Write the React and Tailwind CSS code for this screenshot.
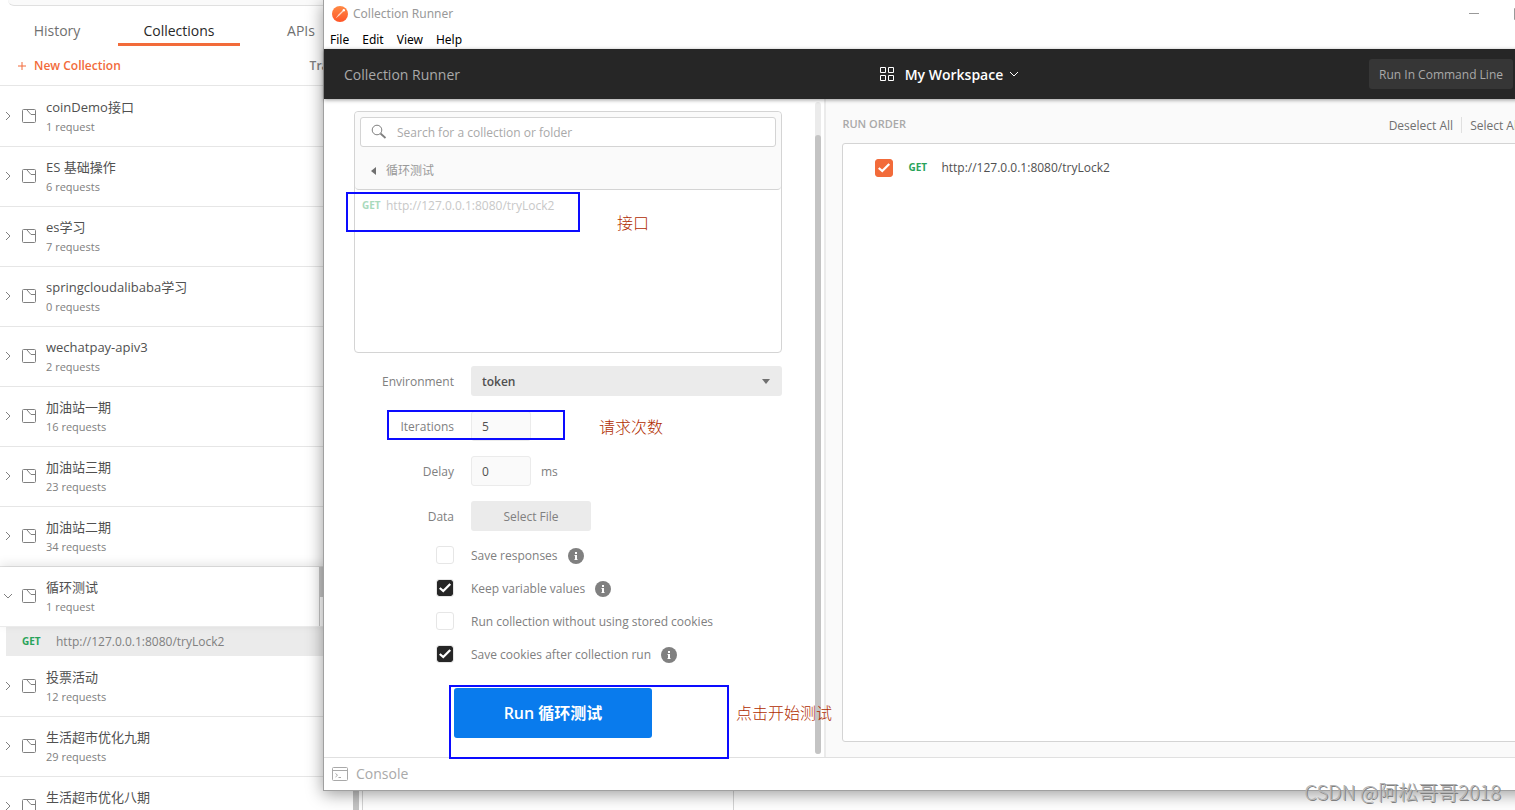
import { useState } from "react";

function ChevronIcon(p) { return <svg {...p} viewBox="0 0 10 10" fill="none" stroke="currentColor"><path d="M3 1 L7 5 L3 9"/></svg>; }
function ChevronDownIcon(p) { return <svg {...p} viewBox="0 0 10 10" fill="none" stroke="currentColor"><path d="M1 3 L5 7 L9 3"/></svg>; }
function FolderIcon(p) { return <svg {...p} viewBox="0 0 14 14" fill="none" stroke="currentColor"><path d="M1.5 0.5 H12.5 Q13.5 0.5 13.5 1.5 V12.5 Q13.5 13.5 12.5 13.5 H1.5 Q0.5 13.5 0.5 12.5 V1.5 Q0.5 0.5 1.5 0.5 Z M5 1 L9 5.5 H13.5"/></svg>; }
function PlusIcon(p) { return <svg {...p} viewBox="0 0 8 8" fill="none" stroke="currentColor"><path d="M4 0 V8 M0 4 H8"/></svg>; }
function SearchIcon(p) { return <svg {...p} viewBox="0 0 16 16" fill="none" stroke="currentColor"><circle cx="6" cy="6" r="4.8"/><path d="M9.5 9.5 L14.5 14" strokeWidth="1.8"/></svg>; }
function GridIcon(p) { return <svg {...p} viewBox="0 0 15 15" fill="none" stroke="currentColor"><path d="M0.5 0.5 H5.5 V5.5 H0.5 Z M8.5 0.5 H13.5 V5.5 H8.5 Z M0.5 8.5 H5.5 V13.5 H0.5 Z M8.5 8.5 H13.5 V13.5 H8.5 Z"/></svg>; }
function TickIcon(p) { return <svg {...p} viewBox="0 0 16 16" fill="none" stroke="currentColor" strokeWidth="2.6"><path d="M2 8 L6 11.5 L14 3.5"/></svg>; }
function ConsoleIcon(p) { return <svg {...p} viewBox="0 0 16 14" fill="none" stroke="currentColor"><rect x="0.5" y="0.5" width="15" height="13" rx="1"/><path d="M0.5 3.5 H15.5 M3.5 6.5 L5.5 8.2 L3.5 10 M6.5 10.5 H9"/></svg>; }

function InfoIcon(p) {
  return (
    <svg {...p} viewBox="0 0 16 16">
      <circle cx="8" cy="8" r="8" fill="#808080" />
      <rect x="7" y="4" width="2" height="2" fill="#fff" />
      <rect x="7" y="7" width="2" height="5" fill="#fff" />
      <rect x="6.5" y="7" width="1" height="1" fill="#fff" />
      <rect x="6.5" y="11" width="3" height="1" fill="#fff" />
    </svg>
  );
}

function PostmanLogo(p) {
  return (
    <svg {...p} viewBox="0 0 16 16">
      <defs>
        <linearGradient id="logo" x1="0" y1="0" x2="0" y2="1">
          <stop offset="0" stopColor="#ff8a45" />
          <stop offset="1" stopColor="#ff5527" />
        </linearGradient>
      </defs>
      <circle cx="8" cy="8" r="8" fill="url(#logo)" />
      <path d="M3.6 12.4 L6.4 8.6 L10.6 4.6 L11.4 5.4 L7.4 9.6 Z" fill="#ffd9c8" />
      <circle cx="11.8" cy="4.2" r="1.2" fill="#fff" />
    </svg>
  );
}

const COLLECTIONS = [
  { name: "coinDemo接口", count: "1 request" },
  { name: "ES 基础操作", count: "6 requests" },
  { name: "es学习", count: "7 requests" },
  { name: "springcloudalibaba学习", count: "0 requests" },
  { name: "wechatpay-apiv3", count: "2 requests" },
  { name: "加油站一期", count: "16 requests" },
  { name: "加油站三期", count: "23 requests" },
  { name: "加油站二期", count: "34 requests" },
  { name: "循环测试", count: "1 request", open: true },
  { name: "投票活动", count: "12 requests" },
  { name: "生活超市优化九期", count: "29 requests" },
  { name: "生活超市优化八期" },
];

const OPTIONS = [
  { id: "save-responses", label: "Save responses", checked: false, info: true },
  { id: "keep-values", label: "Keep variable values", checked: true, info: true },
  { id: "no-cookies", label: "Run collection without using stored cookies", checked: false, info: false },
  { id: "save-cookies", label: "Save cookies after collection run", checked: true, info: true },
];

const REQUEST_URL = "http://127.0.0.1:8080/tryLock2";

function CollectionRow({ item }) {
  return (
    <li>
      <div className={item.open ? "relative flex h-[60px] border-b border-[#ebebeb] shadow-[0_-3px_10px_rgba(0,0,0,0.1)]" : "flex h-[60px] border-b border-[#e6e6e6]"}>
        <button aria-label={"Toggle " + item.name} className="mt-6 ml-[3px] flex h-[10px] w-[10px] text-[#808080]">
          {item.open ? <ChevronDownIcon className="h-[10px] w-[10px]" /> : <ChevronIcon className="h-[10px] w-[10px]" />}
        </button>
        <FolderIcon className="mt-[22px] ml-[9px] h-[14px] w-[14px] text-[#808080]" />
        <div className="ml-[10px] pt-[10px] leading-5">
          <div className="text-[13px] text-[#505050]">{item.name}</div>
          {item.count && <div className="text-[11px] text-[#808080]">{item.count}</div>}
        </div>
        {item.open && (
          <div className="mr-[39px] ml-auto flex w-[4px] flex-col">
            <div className="h-[30px] bg-[#c8c8c8]" />
            <div className="flex-1 border-l border-[#c8c8c8]" />
          </div>
        )}
      </div>
      {item.open && (
        <div className="mb-px ml-[6px] flex h-[29px] items-center bg-[#ebebeb]">
          <span className="ml-4 w-[34px] text-[10px] font-bold text-[#29a35a]">GET</span>
          <span className="text-xs text-[#808080]">{REQUEST_URL}</span>
        </div>
      )}
    </li>
  );
}

function Sidebar() {
  return (
    <aside className="w-[323px] shrink-0 overflow-hidden">
      <div className="w-[362px]">
        <div className="ml-2 h-[6px] rounded-b-2xl border-b border-[#e0e0e0] bg-[#fafafa]" />
        <nav className="-ml-1 flex h-10 text-sm text-[#707070]">
          <button className="w-[122px] border-b-3 border-transparent pt-3">History</button>
          <button className="w-[122px] border-b-3 border-[#f26b3a] pt-3 text-[#282828]">Collections</button>
          <button className="w-[122px] border-b-3 border-transparent pt-3">APIs</button>
        </nav>
        <div className="flex h-10 items-center border-b border-[#e6e6e6] pl-[18px] text-xs font-semibold">
          <button className="flex items-center gap-2 text-[#f26b3a]">
            <PlusIcon className="h-2 w-2" />New Collection
          </button>
          <button className="mr-5 ml-auto text-[#808080]">Trash</button>
        </div>
        <ul className="pt-px">
          {COLLECTIONS.map((c) => <CollectionRow key={c.name} item={c} />)}
        </ul>
      </div>
    </aside>
  );
}

function Checkbox({ id, checked, onChange, orange, label }) {
  return (
    <span className="grid h-[18px] w-[18px] shrink-0 place-items-center">
      <input
        id={id}
        type="checkbox"
        aria-label={label}
        checked={checked}
        onChange={onChange}
        className={orange
          ? "peer col-start-1 row-start-1 h-[18px] w-[18px] appearance-none rounded-[3px] border border-[#e6e6e6] checked:border-[#f26b3a] checked:bg-[#f26b3a]"
          : "peer col-start-1 row-start-1 h-[18px] w-[18px] appearance-none rounded-[3px] border border-[#e6e6e6] bg-white bg-clip-padding checked:bg-[#262626]"}
      />
      <TickIcon className="pointer-events-none z-1 col-start-1 row-start-1 hidden h-[14px] w-[14px] text-white peer-checked:block" />
    </span>
  );
}

function Mark({ className }) {
  return <div className={"pointer-events-none absolute border-2 border-[#0c0cff] " + className} />;
}

function Note({ className, children }) {
  return <span className={"absolute text-base leading-5 font-light whitespace-nowrap text-[#b02c00] " + className}>{children}</span>;
}

function FormRow({ label, htmlFor, children }) {
  return (
    <div className="relative flex h-[30px] items-center">
      <label htmlFor={htmlFor} className="mr-[17px] w-[100px] pt-0.5 text-right">{label}</label>
      {children}
    </div>
  );
}

function SettingsPanel() {
  const [options, setOptions] = useState(OPTIONS);
  const [iterations, setIterations] = useState("5");
  const [delay, setDelay] = useState("0");

  const toggle = (id) => {
    setOptions(prev => prev.map(o => (o.id === id ? { ...o, checked: !o.checked } : o)));
  };

  return (
    <section className="flex w-2/5 shrink-0 border-r-2 border-[#ebebeb] text-xs text-[#808080]">
      <div className="min-w-0 flex-1 pt-3 pr-[33px] pl-[30px]">
        <div className="h-[242px] rounded border border-[#d4d4d4]">
          <div className="h-[78px] rounded border-b border-[#d4d4d4] bg-[#fafafa] p-[5px]">
            <label className="flex h-[30px] items-center rounded-[3px] border border-[#d4d4d4] bg-white pl-[10px]">
              <SearchIcon className="h-4 w-4" />
              <input
                aria-label="Search collections"
                placeholder="Search for a collection or folder"
                className="ml-[10px] flex-1 pt-0.5 outline-none placeholder:text-[#a9a9a9]"
              />
            </label>
            <button className="mt-3 ml-[10px] flex h-6 items-center text-[#999]">
              <svg className="mr-[10px] h-2 w-[6px]" viewBox="0 0 6 8"><path d="M6 0 V8 L1 4 Z" fill="#707070" /></svg>
              循环测试
            </button>
          </div>
          <div className="relative flex h-[30px] items-center pt-0.5 pl-[7px]">
            <span className="w-6 text-[10px] font-bold text-[#a9dabd]">GET</span>
            <span className="text-[#c8c8c8]">{REQUEST_URL}</span>
            <Mark className="-left-[9px] top-[2px] h-10 w-[234px]" />
            <Note className="top-[23px] left-[262px]">接口</Note>
          </div>
        </div>

        <form className="mt-[13px]" onSubmit={(e) => e.preventDefault()}>
          <div className="flex flex-col gap-[15px]">
            <FormRow label="Environment" htmlFor="environment">
              <div className="grid flex-1 items-center">
                <select id="environment" className="col-start-1 row-start-1 h-[30px] appearance-none rounded-[3px] bg-[#ebebeb] px-[11px] pt-0.5 font-semibold text-[#505050]">
                  <option>token</option>
                </select>
                <svg className="pointer-events-none z-1 col-start-1 row-start-1 mr-3 h-[5px] w-2 justify-self-end" viewBox="0 0 8 5"><path d="M0 0 H8 L4 5 Z" fill="#707070" /></svg>
              </div>
            </FormRow>
            <FormRow label="Iterations" htmlFor="iterations">
              <input id="iterations" value={iterations} onChange={(e) => setIterations(e.target.value)} className="h-[30px] w-[60px] rounded-[3px] border border-[#ebebeb] bg-[#fafafa] px-[10px] text-[#505050]" />
              <Mark className="-top-px left-[33px] h-[30px] w-[178px]" />
              <Note className="top-[6px] left-[245px]">请求次数</Note>
            </FormRow>
            <FormRow label="Delay" htmlFor="delay">
              <input id="delay" value={delay} onChange={(e) => setDelay(e.target.value)} className="h-[30px] w-[60px] rounded-[3px] border border-[#ebebeb] bg-[#fafafa] px-[10px] text-[#505050]" />
              <span className="ml-[10px] pt-0.5">ms</span>
            </FormRow>
            <FormRow label="Data" htmlFor="data-file">
              <button id="data-file" type="button" className="h-[30px] w-[120px] rounded-[3px] bg-[#ebebeb] pt-0.5">Select File</button>
            </FormRow>
          </div>

          <div className="mt-[7px] ml-[82px]">
            {options.map((o) => (
              <div key={o.id} className="flex h-[33px] items-center">
                <Checkbox id={o.id} checked={o.checked} onChange={() => toggle(o.id)} />
                <label htmlFor={o.id} className="ml-[17px] pt-0.5">{o.label}</label>
                {o.info && <InfoIcon className="mt-0.5 ml-[10px] h-4 w-4" />}
              </div>
            ))}
          </div>

          <div className="relative mt-[18px] ml-[100px]">
            <button className="h-[50px] w-[198px] rounded-[3px] bg-[#097bed] text-base font-semibold text-white">Run 循环测试</button>
            <Mark className="-top-[3px] -left-[5px] h-[74px] w-[280px]" />
            <Note className="top-[15px] left-[282px]">点击开始测试</Note>
          </div>
        </form>
      </div>
      {/* Scrollbar */}
      <div className="mt-[3px] mr-[3px] mb-[3px] flex w-[6px] flex-col rounded-full bg-[#ebebeb] pt-[33px]">
        <div className="flex-1 rounded-full bg-[#c4c4c4]" />
      </div>
    </section>
  );
}

function RunOrderPanel() {
  const [checked, setChecked] = useState(true);
  return (
    <section className="flex flex-1 flex-col bg-[#fafafa] pb-[15px] pl-4 text-xs">
      <div className="flex h-11 items-center pt-2 pr-[60px] text-[#707070]">
        <h2 className="pb-0.5 text-[11px] font-semibold text-[#a9a9a9]">RUN ORDER</h2>
        <button className="ml-auto pt-0.5">Deselect All</button>
        <span className="mx-2 h-4 w-px bg-[#e0e0e0]" />
        <button className="pt-0.5">Select All</button>
      </div>
      <div className="flex-1 rounded-[3px] border border-[#d4d4d4] bg-white pt-[9px] pl-8">
        <div className="flex h-[30px] items-center">
          <Checkbox checked={checked} onChange={() => setChecked(!checked)} orange label={REQUEST_URL} />
          <span className="ml-[15px] w-[33px] text-[10px] font-bold text-[#29a35a]">GET</span>
          <span className="text-[#505050]">{REQUEST_URL}</span>
        </div>
      </div>
    </section>
  );
}

function RunnerWindow() {
  return (
    <main className="relative z-10 -mr-[65px] flex min-h-0 flex-1 flex-col border-b border-l border-[#a0a0a0] bg-white shadow-[0_3px_16px_rgba(0,0,0,0.4)]">
      <div className="flex h-7 items-center pl-2 font-['Noto_Sans',sans-serif] text-xs text-[#999]">
        <PostmanLogo className="mr-[5px] h-4 w-4" />
        <span>Collection Runner</span>
        <button aria-label="Minimize" className="ml-auto flex w-[46px] justify-center">
          <svg className="h-[10px] w-[10px]" viewBox="0 0 10 10"><path d="M0 4.5 H10" stroke="#999" /></svg>
        </button>
        <button aria-label="Maximize" className="mr-[37px] flex w-[46px] justify-center">
          <svg className="h-3 w-3" viewBox="0 0 12 12" fill="none"><path d="M0.5 0.5 H11.5 V11.5 H0.5 Z" stroke="#999" /></svg>
        </button>
      </div>
      <div className="flex h-[21px] items-center gap-[13px] pt-0.5 pl-[6px] font-['Noto_Sans',sans-serif] text-xs text-black">
        <button>File</button>
        <button>Edit</button>
        <button>View</button>
        <button>Help</button>
      </div>
      <header className="relative z-10 grid h-[50px] shrink-0 grid-cols-[1fr_auto_1fr] items-center bg-[#262626] pr-[67px] pl-5 text-[#a9a9a9] shadow-[0_1px_4px_rgba(0,0,0,0.4)]">
        <h1 className="pt-0.5 text-sm">Collection Runner</h1>
        <button className="ml-[42px] flex items-center text-sm font-semibold text-white">
          <GridIcon className="mr-[10px] h-[15px] w-[15px]" />
          <span className="pt-0.5">My Workspace</span>
          <ChevronDownIcon className="ml-[6px] h-[10px] w-[10px]" />
        </button>
        <button className="h-[30px] justify-self-end rounded-[3px] bg-[#363636] px-[10px] pt-0.5 text-xs">Run In Command Line</button>
      </header>
      <div className="flex min-h-0 flex-1">
        <SettingsPanel />
        <RunOrderPanel />
      </div>
      <footer className="flex h-[33px] shrink-0 items-center border-t border-[#e0e0e0] pl-2 text-sm text-[#a9a9a9]">
        <button className="flex items-center gap-2">
          <ConsoleIcon className="h-[14px] w-4" />Console
        </button>
      </footer>
    </main>
  );
}

export default function App() {
  return (
    <div className="relative flex h-screen overflow-hidden bg-white font-['Open_Sans','Noto_Sans_CJK_SC',sans-serif]">
      <Sidebar />
      <div className="flex min-w-0 flex-1 flex-col">
        <RunnerWindow />
        {/* Sliver of the window behind */}
        <div className="flex h-[19px] shrink-0 pl-[30px]">
          <div className="mr-[3px] w-[6px] bg-[#c4c4c4]" />
          <div className="w-[372px] border-x border-[#d4d4d4]" />
        </div>
      </div>
      <p className="absolute right-[14px] bottom-1 z-20 font-['Noto_Sans_CJK_SC',sans-serif] text-xl leading-7 font-light text-[#b4b4b4] [text-shadow:1px_1px_0_#808080]">CSDN @阿松哥哥2018</p>
    </div>
  );
}
